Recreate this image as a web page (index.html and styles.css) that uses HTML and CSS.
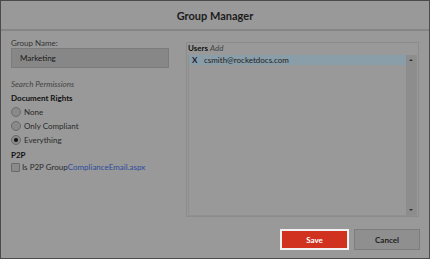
FILE: index.html
```html
<!DOCTYPE html>
<html>
<head>
<meta charset="utf-8">
<link rel="stylesheet" href="styles.css">
</head>
<body>
<div class="modal">
  <div class="header">Group Manager</div>
  <div class="body">
    <div class="left">
      <div class="label">Group Name:</div>
      <div class="input">Marketing</div>
      <div class="italic">Search Permissions</div>
      <div class="bold">Document Rights</div>
      <div class="opt"><span class="radio"></span>None</div>
      <div class="opt"><span class="radio"></span>Only Compliant</div>
      <div class="opt"><span class="radio checked"></span>Everything</div>
      <div class="bold p2p">P2P</div>
      <div class="opt cb"><span class="check"></span>Is P2P Group<a class="link">ComplianceEmail.aspx</a></div>
    </div>
    <div class="right">
      <div class="users-head"><b>Users</b> <i>Add</i></div>
      <div class="list">
        <div class="rows">
          <div class="row"><span class="x">X</span>csmith@rocketdocs.com</div>
        </div>
        <div class="scroll">
          <span class="arrow up"></span>
          <span class="arrow down"></span>
        </div>
      </div>
    </div>
  </div>
  <div class="footer">
    <button class="btn save">Save</button>
    <button class="btn cancel">Cancel</button>
  </div>
</div>
</body>
</html>
```
FILE: styles.css
```css
html, body { margin: 0; padding: 0; }
body {
  width: 430px; height: 259px; overflow: hidden;
  background: #4a4a4a;
  font-family: Lato, "Open Sans", sans-serif;
  color: #1c1c1c;
}
.modal {
  box-sizing: border-box;
  width: 428px; height: 257px;
  margin: 1px 0 0 1px;
  background: #999;
  display: flex; flex-direction: column;
}
.header {
  height: 28px; flex: none;
  display: flex; align-items: center; justify-content: center;
  font-weight: bold; font-size: 11px;
  border-bottom: 2px solid #858585;
}
.body {
  display: flex; flex: 1;
  padding: 7px 10px 0 10px;
}
.left { width: 158px; font-size: 8px; line-height: 10px; }
.label { color: #333; height: 10px; }
.input {
  height: 20px; box-sizing: border-box;
  background: #878787; border: 1px solid #7c7c7c;
  padding: 4px 8px; color: #1a1a1a; line-height: 10px;
}
.italic { font-style: italic; color: #444; margin-top: 11px; height: 10px; }
.bold { font-weight: bold; margin-top: 4px; color: #111; height: 10px; }
.opt { display: flex; align-items: center; margin-top: 4px; color: #2a2a2a; height: 10px; }
.p2p { margin-top: 5px; }
.opt.cb { margin-top: 2px; }
.radio {
  width: 8px; height: 8px; border-radius: 50%;
  background: #8a8a8a; border: 1px solid #6a6a6a;
  margin-right: 3px; position: relative; flex: none;
}
.radio.checked::after {
  content: ""; position: absolute; left: 2px; top: 2px;
  width: 4px; height: 4px; border-radius: 50%; background: #111;
}
.check {
  width: 7px; height: 7px; border-radius: 1px; flex: none;
  background: #8a8a8a; border: 1px solid #6a6a6a; margin-right: 2px;
}
.link { color: #2d4a9e; }
.right {
  margin-left: 17px; margin-top: 4px; flex: 1;
  border: 1px solid #8c8c8c; box-sizing: border-box;
  height: 175px;
  display: flex; flex-direction: column;
  padding: 0 1px 0 1px;
}
.users-head { font-size: 8px; height: 12px; line-height: 11px; }
.users-head b { color: #111; }
.users-head i { color: #444; }
.list { flex: 1; display: flex; border: 1px solid #8f8f8f; border-top: none; }
.rows { flex: 1; }
.row {
  height: 10px; background: #8a9ea9; font-size: 8px;
  display: flex; align-items: center; color: #222;
}
.x { font-weight: bold; width: 15px; padding-left: 3px; box-sizing: border-box; color: #1a1a3a; }
.scroll {
  width: 10px; background: #8d8d8d;
  display: flex; flex-direction: column; justify-content: space-between; align-items: center;
  padding: 4px 0;
}
.arrow { width: 0; height: 0; border-left: 2px solid transparent; border-right: 2px solid transparent; }
.arrow.up { border-bottom: 2px solid #333; }
.arrow.down { border-top: 2px solid #333; }
.footer {
  display: flex; justify-content: flex-end; gap: 5px;
  padding: 0 9px 8px 0;
  margin-top: 10px;
}
.btn {
  height: 21px; font-family: inherit; font-size: 8px; font-weight: bold;
  box-sizing: border-box; padding: 0;
}
.save { width: 69px; background: #d1321f; color: #fff; border: 2px solid #f2f2f2; }
.cancel { width: 66px; background: #8f8f8f; color: #222; border: 1px solid #7d7d7d; }
```
